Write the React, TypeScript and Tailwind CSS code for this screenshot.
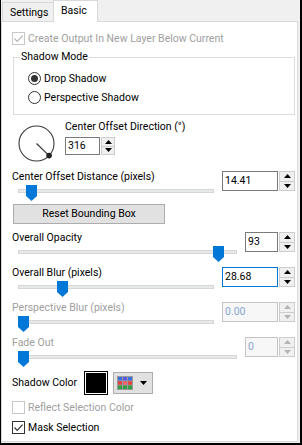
import React from "react";

const DIS = "text-[#a0a0a0]";

function Check({ checked, disabled }: { checked?: boolean; disabled?: boolean }) {
  return (
    <div
      className={
        "w-[13px] h-[13px] shrink-0 border bg-white flex items-center justify-center " +
        (disabled ? "border-[#c8c8c8]" : "border-[#333333]")
      }
    >
      {checked ? (
        <svg width="11" height="11" viewBox="0 0 11 11">
          <path
            d="M1.5 5.5 L4.2 8.3 L9.6 2.6"
            fill="none"
            stroke={disabled ? "#b5b5b5" : "#333333"}
            strokeWidth="1.2"
          />
        </svg>
      ) : null}
    </div>
  );
}

function Radio({ checked }: { checked?: boolean }) {
  return (
    <div className="w-[13px] h-[13px] shrink-0 rounded-full border border-[#333333] bg-white flex items-center justify-center">
      {checked ? <div className="w-[7px] h-[7px] rounded-full bg-[#333333]" /> : null}
    </div>
  );
}

function Arrow({ up, color }: { up?: boolean; color: string }) {
  return (
    <svg width="7" height="4" viewBox="0 0 7 4">
      {up ? <path d="M3.5 0 L7 4 L0 4 Z" fill={color} /> : <path d="M0 0 L7 0 L3.5 4 Z" fill={color} />}
    </svg>
  );
}

function SpinBtns({ small, disabled }: { small?: boolean; disabled?: boolean }) {
  const c = disabled ? "#b4b4b4" : "#000000";
  return (
    <div
      className={
        "flex flex-col border border-[#cdcdcd] bg-[#f0f0f0] " +
        (small ? "w-[14px] h-[18px]" : "w-[16px] h-[20px]")
      }
    >
      <div className="flex-1 flex items-center justify-center border-b border-[#cdcdcd]">
        <Arrow up color={c} />
      </div>
      <div className="flex-1 flex items-center justify-center">
        <Arrow color={c} />
      </div>
    </div>
  );
}

function Spin({
  value,
  inputW,
  small,
  focused,
  disabled,
}: {
  value: string;
  inputW: string;
  small?: boolean;
  focused?: boolean;
  disabled?: boolean;
}) {
  const border = focused
    ? "border-[#0078d7] bg-white"
    : disabled
    ? "border-[#c4c4c4] bg-[#f7f7f7] text-[#86a6cf]"
    : "border-[#7a7a7a] bg-white";
  return (
    <div className="flex gap-[1px]">
      <div
        className={
          "border flex items-center pl-[2px] leading-[12px] " +
          inputW +
          " " +
          (small ? "h-[18px]" : "h-[20px]") +
          " " +
          border
        }
      >
        {value}
      </div>
      <SpinBtns small={small} disabled={disabled} />
    </div>
  );
}

function Slider({ wide, thumb }: { wide?: boolean; thumb: string }) {
  return (
    <div className={"relative h-[16px] ml-[16px] " + (wide ? "w-[219px]" : "w-[196px]")}>
      <div className="absolute left-0 right-0 top-[4px] h-[4px] bg-[#e7eaea] border border-[#d6d6d6]" />
      <svg className={"absolute top-0 " + thumb} width="11" height="16" viewBox="0 0 11 16">
        <path d="M0 0 H11 V11 L5.5 16 L0 11 Z" fill="#0078d7" />
      </svg>
    </div>
  );
}

function SliderRow({
  label,
  value,
  wide,
  thumb,
  focused,
  disabled,
  mt,
}: {
  label: string;
  value: string;
  wide?: boolean;
  thumb: string;
  focused?: boolean;
  disabled?: boolean;
  mt: string;
}) {
  return (
    <div className={"flex items-start justify-between " + mt}>
      <div className="flex flex-col">
        <div className={"h-[12px] leading-[12px] ml-[10px] whitespace-nowrap " + (disabled ? DIS : "")}>
          {label}
        </div>
        <div className="mt-[2px]">
          <Slider wide={wide} thumb={thumb} />
        </div>
      </div>
      <div className="mr-[2px]">
        <Spin
          value={value}
          inputW={wide ? "w-[33px]" : "w-[56px]"}
          focused={focused}
          disabled={disabled}
        />
      </div>
    </div>
  );
}

function Palette() {
  const colors = [
    ["#3a6fe0", "#5a5ae6", "#3a6fe0"],
    ["#e84040", "#f06070", "#e84040"],
    ["#2f9e3f", "#2f9e3f", "#2f9e3f"],
  ];
  return (
    <svg width="16" height="14" viewBox="0 0 16 14">
      <rect x="0" y="0" width="16" height="14" fill="#9a9a9a" />
      {colors.map((row, r) =>
        row.map((c, i) => (
          <rect key={r + "-" + i} x={1 + i * 5} y={1 + r * 4.3} width="4" height="3.4" fill={c} />
        ))
      )}
    </svg>
  );
}

export default function App() {
  return (
    <div className="w-[302px] h-[445px] bg-[#f0f0f0] flex flex-col border-l border-r-2 border-b-2 border-black font-['Roboto',sans-serif] text-[10.5px] text-black overflow-hidden">
      {/* Tabs */}
      <div className="flex items-end h-[21px] pl-[1px] shrink-0">
        <div className="w-[51px] h-[19px] border-t border-l border-[#d9d9d9] bg-[#f0f0f0] pl-[7px] pt-[4px] leading-[12px]">
          Settings
        </div>
        <div className="w-[45px] h-[22px] -mb-[1px] relative z-10 border-t border-x border-[#d9d9d9] bg-white pl-[7px] pt-[4px] leading-[12px]">
          Basic
        </div>
      </div>

      {/* Panel */}
      <div className="flex-1 mr-[2px] mb-[1px] bg-white border border-[#d9d9d9] flex flex-col">
        {/* Create output checkbox */}
        <div className="flex items-center gap-[3px] mt-[10px] ml-[10px] h-[13px]">
          <Check checked disabled />
          <span className={DIS + " leading-[12px] whitespace-nowrap"}>Create Output In New Layer Below Current</span>
        </div>

        {/* Shadow mode group */}
        <div className="relative mt-[12px] ml-[11px] w-[282px] h-[58px] border border-[#dcdcdc] pt-[14px] pl-[14px] flex flex-col gap-[6px]">
          <div className="absolute -top-[7px] left-[6px] bg-white px-[1px] leading-[12px]">Shadow Mode</div>
          <div className="flex items-center gap-[3px] h-[13px]">
            <Radio checked />
            <span className="leading-[12px]">Drop Shadow</span>
          </div>
          <div className="flex items-center gap-[3px] h-[13px]">
            <Radio />
            <span className="leading-[12px]">Perspective Shadow</span>
          </div>
        </div>

        {/* Dial row */}
        <div className="flex items-start mt-[6px]">
          <svg className="ml-[15px] mt-[3px] shrink-0" width="40" height="40" viewBox="0 0 40 40">
            <circle cx="19.5" cy="19.5" r="17.5" fill="none" stroke="#3a3a3a" strokeWidth="1.1" />
            <line x1="19.5" y1="19.5" x2="32.1" y2="31.6" stroke="#3a3a3a" strokeWidth="1.2" />
            <circle cx="32.1" cy="31.6" r="2.8" fill="#222222" />
          </svg>
          <div className="flex flex-col ml-[8px]">
            <div className="h-[12px] leading-[12px] whitespace-nowrap">Center Offset Direction (°)</div>
            <div className="mt-[4px]">
              <Spin value="316" inputW="w-[35px]" small />
            </div>
          </div>
        </div>

        <SliderRow label="Center Offset Distance (pixels)" value="14.41" thumb="left-[8px]" mt="mt-[7px]" />

        {/* Reset button */}
        <div className="mt-[3px] ml-[11px] w-[152px] h-[20px] bg-[#e1e1e1] border border-[#adadad] flex items-center justify-center leading-[12px]">
          Reset Bounding Box
        </div>

        <SliderRow label="Overall Opacity" value="93" wide thumb="left-[195px]" mt="mt-[8px]" />
        <SliderRow label="Overall Blur (pixels)" value="28.68" thumb="left-[39px]" focused mt="mt-[5px]" />
        <SliderRow label="Perspective Blur (pixels)" value="0.00" thumb="left-[0px]" disabled mt="mt-[5px]" />
        <SliderRow label="Fade Out" value="0" wide thumb="left-[0px]" disabled mt="mt-[5px]" />

        {/* Shadow color row */}
        <div className="flex items-center mt-[4px] ml-[10px] h-[24px]">
          <span className="w-[72px] leading-[12px] whitespace-nowrap">Shadow Color</span>
          <div className="w-[24px] h-[24px] border border-black bg-white p-[1px]">
            <div className="w-full h-full bg-black" />
          </div>
          <div className="ml-[5px] w-[40px] h-[22px] bg-[#e1e1e1] border border-[#adadad] flex items-center pl-[3px] pr-[5px]">
            <Palette />
            <div className="ml-auto">
              <Arrow color="#000000" />
            </div>
          </div>
        </div>

        {/* Reflect selection color */}
        <div className="flex items-center gap-[3px] mt-[6px] ml-[10px] h-[13px]">
          <Check disabled />
          <span className={DIS + " leading-[12px]"}>Reflect Selection Color</span>
        </div>

        {/* Mask selection */}
        <div className="flex items-center gap-[3px] mt-[7px] ml-[10px] h-[13px]">
          <Check checked />
          <span className="leading-[12px]">Mask Selection</span>
        </div>
      </div>
    </div>
  );
}
